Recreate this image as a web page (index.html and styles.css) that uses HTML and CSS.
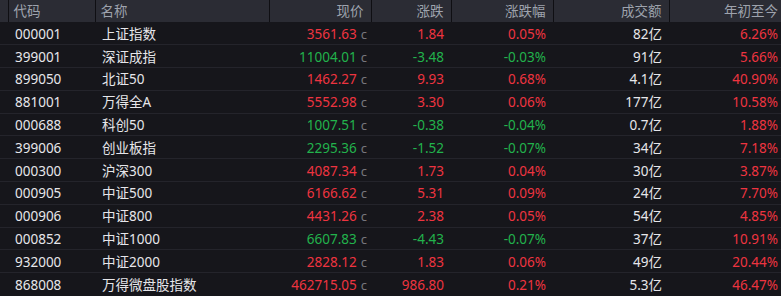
FILE: index.html
```html
<!DOCTYPE html>
<html lang="zh-CN">
<head>
  <meta charset="UTF-8">
  <title>指数行情</title>
  <link rel="stylesheet" href="styles.css">
</head>
<body>
  <table class="quote-table">
    <colgroup>
      <col style="width: 8px">
      <col style="width: 87px">
      <col style="width: 174px">
      <col style="width: 102px">
      <col style="width: 80px">
      <col style="width: 102px">
      <col style="width: 116px">
      <col style="width: 112px">
    </colgroup>
    <thead>
      <tr>
        <th class="gutter"></th>
        <th class="left">代码</th>
        <th class="left">名称</th>
        <th>现价</th>
        <th>涨跌</th>
        <th>涨跌幅</th>
        <th>成交额</th>
        <th class="last">年初至今</th>
      </tr>
    </thead>
    <tbody>
      <tr>
        <td></td><td class="code">000001</td><td class="name">上证指数</td>
        <td class="price up">3561.63<span class="tag">c</span></td>
        <td class="up">1.84</td><td class="up">0.05%</td><td class="amount">82亿</td><td class="last up">6.26%</td>
      </tr>
      <tr>
        <td></td><td class="code">399001</td><td class="name">深证成指</td>
        <td class="price down">11004.01<span class="tag">c</span></td>
        <td class="down">-3.48</td><td class="down">-0.03%</td><td class="amount">91亿</td><td class="last up">5.66%</td>
      </tr>
      <tr>
        <td></td><td class="code">899050</td><td class="name">北证50</td>
        <td class="price up">1462.27<span class="tag">c</span></td>
        <td class="up">9.93</td><td class="up">0.68%</td><td class="amount">4.1亿</td><td class="last up">40.90%</td>
      </tr>
      <tr>
        <td></td><td class="code">881001</td><td class="name">万得全A</td>
        <td class="price up">5552.98<span class="tag">c</span></td>
        <td class="up">3.30</td><td class="up">0.06%</td><td class="amount">177亿</td><td class="last up">10.58%</td>
      </tr>
      <tr>
        <td></td><td class="code">000688</td><td class="name">科创50</td>
        <td class="price down">1007.51<span class="tag">c</span></td>
        <td class="down">-0.38</td><td class="down">-0.04%</td><td class="amount">0.7亿</td><td class="last up">1.88%</td>
      </tr>
      <tr>
        <td></td><td class="code">399006</td><td class="name">创业板指</td>
        <td class="price down">2295.36<span class="tag">c</span></td>
        <td class="down">-1.52</td><td class="down">-0.07%</td><td class="amount">34亿</td><td class="last up">7.18%</td>
      </tr>
      <tr>
        <td></td><td class="code">000300</td><td class="name">沪深300</td>
        <td class="price up">4087.34<span class="tag">c</span></td>
        <td class="up">1.73</td><td class="up">0.04%</td><td class="amount">30亿</td><td class="last up">3.87%</td>
      </tr>
      <tr>
        <td></td><td class="code">000905</td><td class="name">中证500</td>
        <td class="price up">6166.62<span class="tag">c</span></td>
        <td class="up">5.31</td><td class="up">0.09%</td><td class="amount">24亿</td><td class="last up">7.70%</td>
      </tr>
      <tr>
        <td></td><td class="code">000906</td><td class="name">中证800</td>
        <td class="price up">4431.26<span class="tag">c</span></td>
        <td class="up">2.38</td><td class="up">0.05%</td><td class="amount">54亿</td><td class="last up">4.85%</td>
      </tr>
      <tr>
        <td></td><td class="code">000852</td><td class="name">中证1000</td>
        <td class="price down">6607.83<span class="tag">c</span></td>
        <td class="down">-4.43</td><td class="down">-0.07%</td><td class="amount">37亿</td><td class="last up">10.91%</td>
      </tr>
      <tr>
        <td></td><td class="code">932000</td><td class="name">中证2000</td>
        <td class="price up">2828.12<span class="tag">c</span></td>
        <td class="up">1.83</td><td class="up">0.06%</td><td class="amount">49亿</td><td class="last up">20.44%</td>
      </tr>
      <tr>
        <td></td><td class="code">868008</td><td class="name">万得微盘股指数</td>
        <td class="price up">462715.05<span class="tag">c</span></td>
        <td class="up">986.80</td><td class="up">0.21%</td><td class="amount">5.3亿</td><td class="last up">46.47%</td>
      </tr>
    </tbody>
  </table>
</body>
</html>
```

FILE: styles.css
```css
* {
  box-sizing: border-box;
}

body {
  margin: 0;
  padding: 0;
  background: #16161b;
  font-family: "Noto Sans", "Noto Sans CJK SC", sans-serif;
  font-size: 13.5px;
  overflow: hidden;
}

.quote-table {
  width: 781px;
  border-collapse: collapse;
  table-layout: fixed;
}

.quote-table th {
  height: 22px;
  padding: 0 7px 0 0;
  background: #2b2c34;
  color: #9ea3ad;
  font-weight: normal;
  text-align: right;
  border-left: 1px solid #0f0f13;
  white-space: nowrap;
  line-height: 22px;
}

.quote-table th.gutter {
  border-left: none;
}

.quote-table th.left {
  text-align: left;
  padding: 0 0 0 5px;
}

.quote-table th.last {
  padding-right: 3px;
}

.quote-table td {
  height: 22.8px;
  padding: 1px 7px 0 0;
  line-height: 20px;
  text-align: right;
  white-space: nowrap;
  border-top: 1px solid #24242b;
  color: #e6e6ea;
}

.quote-table tbody tr:first-child td {
  border-top: none;
}

.quote-table td.code {
  text-align: left;
  padding-left: 7px;
}

.quote-table td.name {
  text-align: left;
  padding-left: 7px;
}

.quote-table td.price {
  padding-right: 4px;
}

.quote-table td.last {
  padding-right: 3px;
}

.up {
  color: #ee3440 !important;
}

.down {
  color: #22b24c !important;
}

.tag {
  margin-left: 4px;
  color: #76767c;
  font-size: 13px;
}
```
